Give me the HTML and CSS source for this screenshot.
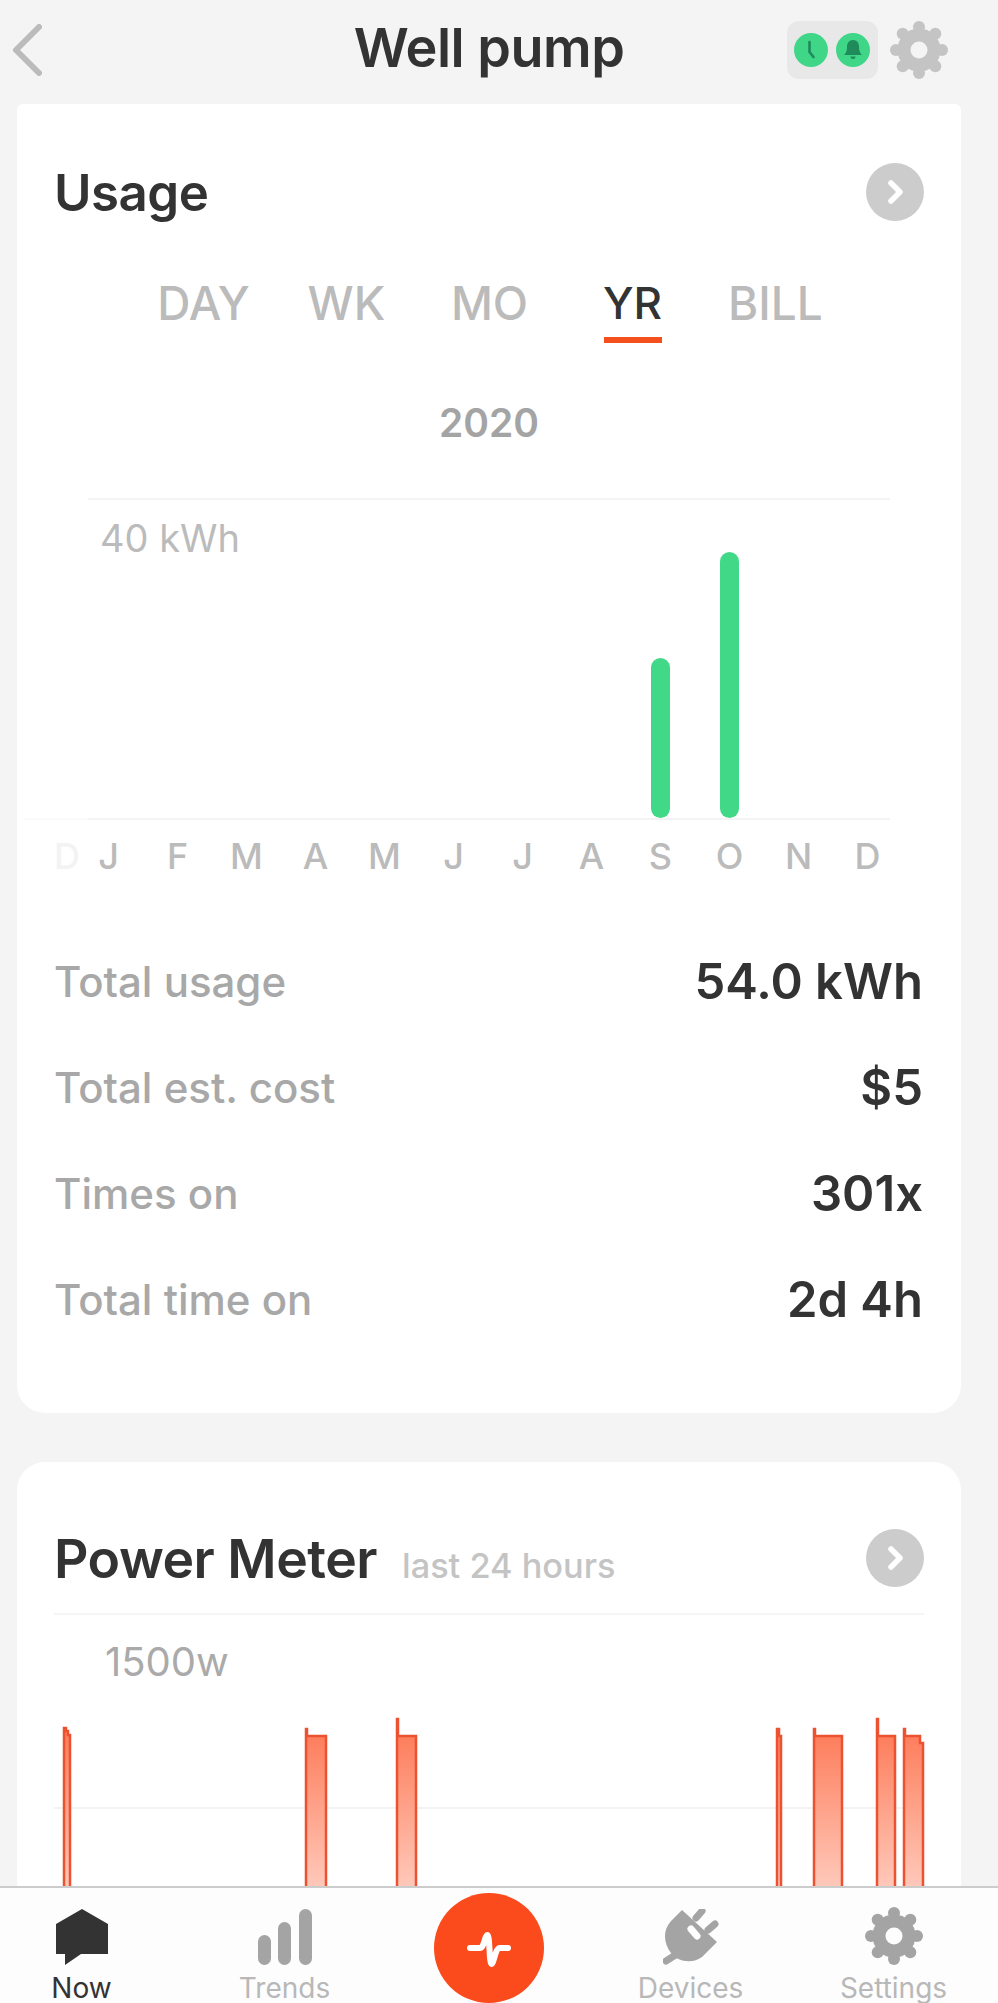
FILE: index.html
```html
<!DOCTYPE html>
<html lang="en">
<head>
  <meta charset="UTF-8" />
  <meta name="viewport" content="width=device-width, initial-scale=1.0"/>
  <title>Well pump</title>
  <link rel="stylesheet" href="styles.css">
</head>
<body>

<svg class="defs" width="0" height="0">
  <symbol id="gear" viewBox="0 0 58 58">
    <circle cx="29" cy="29" r="15" fill="none" stroke="currentColor" stroke-width="13"/>
    <circle cx="29" cy="6" r="6" fill="currentColor"/>
    <circle cx="45.3" cy="12.7" r="6" fill="currentColor"/>
    <circle cx="52" cy="29" r="6" fill="currentColor"/>
    <circle cx="45.3" cy="45.3" r="6" fill="currentColor"/>
    <circle cx="29" cy="52" r="6" fill="currentColor"/>
    <circle cx="12.7" cy="45.3" r="6" fill="currentColor"/>
    <circle cx="6" cy="29" r="6" fill="currentColor"/>
    <circle cx="12.7" cy="12.7" r="6" fill="currentColor"/>
  </symbol>
  <symbol id="go" viewBox="0 0 58 58">
    <circle cx="29" cy="29" r="29" fill="#ccc"/>
    <path d="M25 20l9 9-9 9" fill="none" stroke="#fff" stroke-width="5.5" stroke-linecap="round" stroke-linejoin="round"/>
  </symbol>
</svg>

<header class="topbar">
  <svg class="back" width="30" height="52" viewBox="0 0 30 52">
    <path d="M27 3L4 26l23 23" fill="none" stroke="#bbb" stroke-width="6" stroke-linecap="round" stroke-linejoin="round"/>
  </svg>
  <h1>Well pump</h1>
  <div class="actions">
    <div class="status">
      <svg width="34" height="34" viewBox="0 0 34 34">
        <circle cx="17" cy="17" r="17" fill="#3fd688"/>
        <path d="M15.5 9v10l4 5" fill="none" stroke="#1f8a5a" stroke-width="2.6" stroke-linecap="round" stroke-linejoin="round"/>
      </svg>
      <svg width="34" height="34" viewBox="0 0 34 34">
        <circle cx="17" cy="17" r="17" fill="#3fd688"/>
        <path d="M17 7c-4 0-6 3-6 7 0 4-1 6-3 8h18c-2-2-3-4-3-8 0-4-2-7-6-7zM14.500 23.500a2.500 2.500 0 0 0 5 0z" fill="#1f8a5a"/>
      </svg>
    </div>
    <svg class="gear" width="58" height="58"><use href="#gear"/></svg>
  </div>
</header>

<main class="content">
  <section class="card usage">
    <div class="card-head">
      <h2>Usage</h2>
      <svg width="58" height="58"><use href="#go"/></svg>
    </div>

    <div class="tabs">
      <span>DAY</span>
      <span>WK</span>
      <span>MO</span>
      <span class="active">YR</span>
      <span>BILL</span>
    </div>

    <div class="year">2020</div>

    <div class="usage-chart">
      <div class="bars">
        <span class="unit">40 kWh</span>
        <i></i><i></i><i></i><i></i><i></i><i></i><i></i><i></i>
        <i class="bar bar-sep"></i>
        <i class="bar bar-oct"></i>
        <i></i><i></i>
      </div>
      <div class="months">
        <span class="ghost">D</span>
        <span>J</span><span>F</span><span>M</span><span>A</span><span>M</span><span>J</span>
        <span>J</span><span>A</span><span>S</span><span>O</span><span>N</span><span>D</span>
      </div>
    </div>

    <dl class="stats">
      <div><dt>Total usage</dt><dd>54.0 kWh</dd></div>
      <div><dt>Total est. cost</dt><dd>$5</dd></div>
      <div><dt>Times on</dt><dd>301x</dd></div>
      <div><dt>Total time on</dt><dd>2d 4h</dd></div>
    </dl>
  </section>

  <section class="card power">
    <div class="card-head">
      <h2>Power Meter <small>last 24 hours</small></h2>
      <svg width="58" height="58"><use href="#go"/></svg>
    </div>
    <div class="power-unit">1500w</div>
    <svg class="power-chart" width="944" height="180" viewBox="17 1707 944 180">
      <defs>
        <linearGradient id="fade" x1="0" y1="1728" x2="0" y2="1887" gradientUnits="userSpaceOnUse">
          <stop offset="0" stop-color="#fd7a58"/>
          <stop offset="1" stop-color="#ffc9ba"/>
        </linearGradient>
      </defs>
      <path d="M54 1808H923" stroke="#f3f3f3" stroke-width="2"/>
      <g fill="url(#fade)" stroke="#ec5230" stroke-width="2.500">
        <path d="M64 1887V1728H66V1731H68V1735H70V1887"/>
        <path d="M306 1887V1729H307V1736H326V1887"/>
        <path d="M397 1887V1719H398V1736H416V1887"/>
        <path d="M777 1887V1729H779V1736H781V1887"/>
        <path d="M814 1887V1729H815V1736H842V1887"/>
        <path d="M877 1887V1719H878V1736H895V1887"/>
        <path d="M904 1887V1729H905V1736H920V1743H923V1887"/>
      </g>
    </svg>
  </section>
</main>

<nav class="tabbar">
  <a class="current">
    <svg width="52" height="56" viewBox="0 0 52 56">
      <path d="M26 0L52 15V45H25L9 56V45H0V15z" fill="#333"/>
    </svg>
    Now
  </a>
  <a>
    <svg width="54" height="56" viewBox="0 0 54 56">
      <rect x="0" y="26" width="13" height="30" rx="6.500" fill="#a4a4a4"/>
      <rect x="20" y="13" width="13" height="43" rx="6.500" fill="#a4a4a4"/>
      <rect x="41" y="0" width="13" height="56" rx="6.500" fill="#a4a4a4"/>
    </svg>
    Trends
  </a>
  <a class="pulse">
    <svg width="44" height="40" viewBox="0 0 44 40">
      <path d="M3 20H13C17 20 18 7 20.500 7C23 7 22 36 24.500 36C27 36 28 20 33 20H41" fill="none" stroke="#fff" stroke-width="6" stroke-linecap="round" stroke-linejoin="round"/>
    </svg>
  </a>
  <a>
    <svg width="56" height="56" viewBox="0 0 56 56">
      <path d="M14 45L3 52" stroke="#a4a4a4" stroke-width="7" stroke-linecap="round"/>
      <path d="M33 9L39 2M45 21L52 15" stroke="#a4a4a4" stroke-width="7" stroke-linecap="round"/>
      <path d="M19 1L54 33L39 48C30 55 14 53 8 44C1 35-1 22 8 12z" fill="#a4a4a4"/>
      <path d="M28 20L34 27" stroke="#fff" stroke-width="7" stroke-linecap="round"/>
    </svg>
    Devices
  </a>
  <a>
    <svg class="nav-gear" width="58" height="58"><use href="#gear"/></svg>
    Settings
  </a>
</nav>

</body>
</html>
```

FILE: styles.css
```css
* {
  box-sizing: border-box;
}

html,
body {
  margin: 0;
  height: 2003px;
  overflow: hidden;
}

body {
  position: relative;
  background: #f4f4f4;
  color: #333;
  font-family: Inter, "Liberation Sans", sans-serif;
}

.defs {
  display: block;
  height: 0;
}

.topbar {
  display: grid;
  grid-template-columns: 1fr auto 1fr;
  align-items: center;
  height: 104px;
  padding: 0 20px 4px 0;
}

.topbar h1 {
  margin: -6px 0 0;
  font-size: 54px;
  font-weight: 600;
  letter-spacing: -0.5px;
}

.back {
  display: block;
  margin-left: 12px;
}

.actions {
  display: flex;
  justify-content: flex-end;
  align-items: center;
  gap: 12px;
  margin-right: 30px;
}

.status {
  display: flex;
  align-items: center;
  justify-content: center;
  gap: 8px;
  width: 91px;
  height: 58px;
  padding-right: 2px;
  background: #e8e8e8;
  border-radius: 12px;
}

.gear {
  color: #c4c4c4;
}

.content {
  padding: 0 37px 0 17px;
}

.card {
  background: #fff;
  padding: 0 37px;
  border-radius: 28px;
}

.usage {
  height: 1309px;
  padding-top: 59px;
  border-radius: 6px 6px 28px 28px;
}

.power {
  height: 600px;
  margin-top: 49px;
  padding-top: 67px;
  position: relative;
}

.card-head {
  display: flex;
  justify-content: space-between;
  align-items: center;
  height: 58px;
}

.card-head h2 {
  margin: 0;
  font-size: 51px;
  font-weight: 600;
  letter-spacing: -0.5px;
}

.power h2 {
  font-size: 53.5px;
}

.card-head small {
  margin-left: 12px;
  font-size: 34.3px;
  font-weight: 500;
  letter-spacing: 0;
  color: #c4c4c4;
}

.tabs {
  display: grid;
  grid-template-columns: repeat(5, 143px);
  margin: 54px 0 0 78px;
  font-size: 46px;
  font-weight: 500;
  color: #bbb;
  text-align: center;
}

.tabs span {
  padding-bottom: 6px;
  line-height: 56px;
}

.tabs .active {
  justify-self: center;
  width: 58px;
  color: #333;
  font-size: 44px;
  border-bottom: 6px solid #f4501e;
  white-space: nowrap;
  display: flex;
  justify-content: center;
}

.year {
  margin-top: 55px;
  font-size: 39px;
  font-weight: 600;
  line-height: 50px;
  color: #a4a4a4;
  text-align: center;
}

.usage-chart {
  position: relative;
  margin: 50px 0 0 20px;
}

.usage-chart::before {
  content: "";
  position: absolute;
  left: -50px;
  top: 320px;
  width: 64px;
  height: 2px;
  background: #fafafa;
}

.bars {
  position: relative;
  display: grid;
  grid-template-columns: repeat(12, 69px);
  align-items: end;
  justify-items: center;
  width: 802px;
  height: 322px;
  margin-left: 14px;
  border-top: 2px solid #f4f4f4;
  border-bottom: 2px solid #f4f4f4;
}

.unit {
  position: absolute;
  left: 12px;
  top: 16px;
  font-size: 38px;
  line-height: 44px;
  color: #bbb;
}

.bar {
  display: block;
  width: 19px;
  background: #41d888;
  border-radius: 10px;
  transform: translateX(-14px);
}

.bar-sep {
  height: 160px;
}

.bar-oct {
  height: 266px;
}

.months {
  position: relative;
  display: grid;
  grid-template-columns: repeat(12, 69px);
  margin-top: 14px;
  font-size: 36px;
  font-weight: 500;
  line-height: 44px;
  color: #bbb;
  text-align: center;
}

.ghost {
  position: absolute;
  left: -20px;
  top: 0;
  color: #f3f3f3;
}

.stats {
  margin: 50px 0 0;
}

.stats div {
  display: flex;
  justify-content: space-between;
  align-items: center;
  height: 106px;
  padding-right: 1px;
}

.stats dt {
  font-size: 42px;
  font-weight: 500;
  color: #a8a8a8;
}

.stats dd {
  margin: 0;
  font-size: 49px;
  font-weight: 600;
  color: #333;
}

.power-unit {
  margin: 0;
  padding: 22px 0 0 51px;
  height: 76px;
  border-top: 2px solid #f5f5f5;
  margin-top: 26px;
  font-size: 40px;
  line-height: 50px;
  color: #aaa;
}

.power-chart {
  display: block;
  margin: 18px 0 0 -37px;
}

.tabbar {
  position: absolute;
  left: 0;
  bottom: 0;
  display: grid;
  grid-template-columns: repeat(5, 203px);
  width: 998px;
  height: 117px;
  padding: 21px 0 0;
  background: #fdfdfd;
  border-top: 2px solid #ccc;
  overflow: hidden;
}

.tabbar a {
  position: relative;
  left: -20px;
  display: flex;
  flex-direction: column;
  align-items: center;
  font-size: 28px;
  line-height: 30px;
  color: #b8b8b8;
}

.tabbar a svg {
  display: block;
  margin-bottom: 8px;
}

.tabbar .current {
  color: #333;
}

.tabbar .pulse {
  justify-content: center;
  justify-self: center;
  left: -19px;
  width: 110px;
  height: 110px;
  margin-top: -16px;
  background: #fb4a1c;
  border-radius: 50%;
}

.tabbar .pulse svg {
  margin: 0;
}

.nav-gear {
  color: #a4a4a4;
  margin-top: -2px;
  margin-bottom: 8px !important;
}
```
